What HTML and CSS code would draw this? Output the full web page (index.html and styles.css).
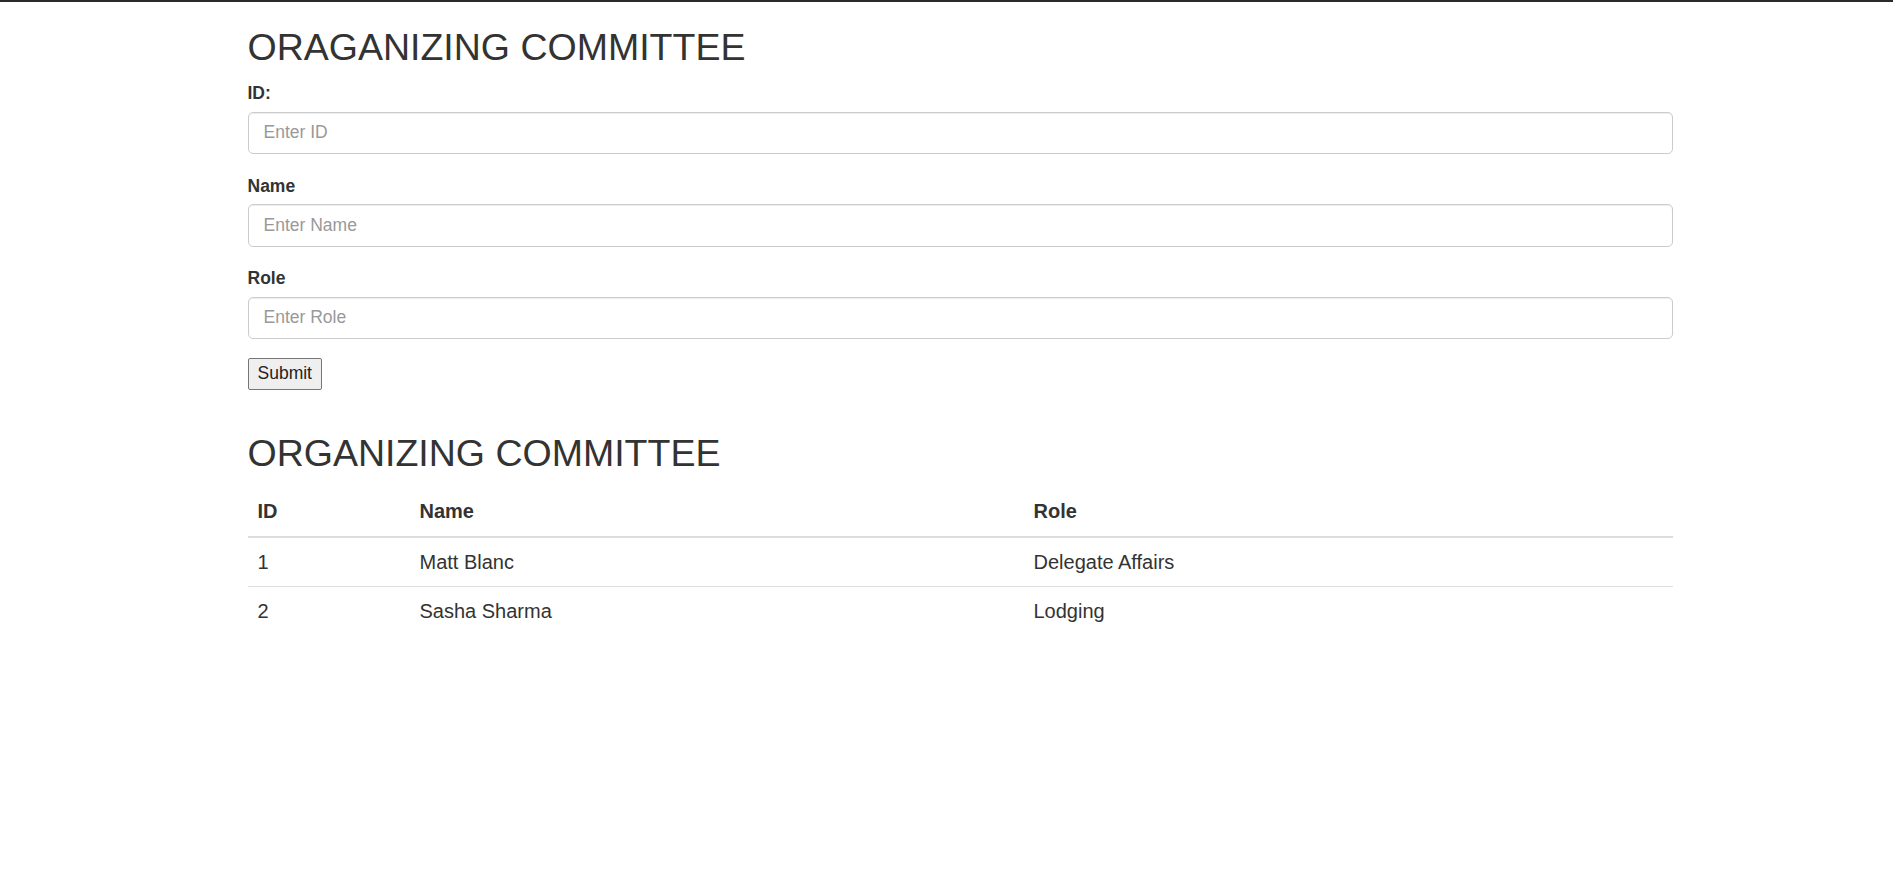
FILE: index.html
```html
<!DOCTYPE html>
<html lang="en">
<head>
<meta charset="utf-8">
<title>Organizing Committee</title>
<link rel="stylesheet" href="styles.css">
</head>
<body>
<div class="topbar"></div>
<div class="container">
  <h2 class="title">ORAGANIZING COMMITTEE</h2>
  <form class="form">
    <div class="form-group">
      <label class="label" for="id">ID:</label>
      <input class="form-control" id="id" type="text" placeholder="Enter ID">
    </div>
    <div class="form-group">
      <label class="label" for="name">Name</label>
      <input class="form-control" id="name" type="text" placeholder="Enter Name">
    </div>
    <div class="form-group">
      <label class="label" for="role">Role</label>
      <input class="form-control" id="role" type="text" placeholder="Enter Role">
    </div>
    <div class="submit-row">
      <button class="btn-submit" type="button">Submit</button>
    </div>
  </form>
  <h2 class="title">ORGANIZING COMMITTEE</h2>
  <table class="table">
    <colgroup>
      <col class="col-id">
      <col class="col-name">
      <col class="col-role">
    </colgroup>
    <thead>
      <tr><th>ID</th><th>Name</th><th>Role</th></tr>
    </thead>
    <tbody>
      <tr><td>1</td><td>Matt Blanc</td><td>Delegate Affairs</td></tr>
      <tr><td>2</td><td>Sasha Sharma</td><td>Lodging</td></tr>
    </tbody>
  </table>
</div>
</body>
</html>
```

FILE: styles.css
```css
* { box-sizing: border-box; }
html, body {
  margin: 0;
  padding: 0;
  background: #fff;
}
body {
  font-family: "Liberation Sans", Arial, Helvetica, sans-serif;
  font-size: 17.5px;
  line-height: 25px;
  color: #333;
}
.topbar {
  height: 2px;
  background: #2a2a2a;
}
.container {
  width: 1425px;
  margin-left: 247.5px;
  padding-top: 0.1px;
}
.title {
  font-size: 37.5px;
  line-height: 41.25px;
  font-weight: 400;
  margin: 24.5px 0 12.5px;
  color: #333;
}
.form { margin: 0; }
.form-group {
  margin-bottom: 18.75px;
}
.label {
  display: block;
  font-weight: 700;
  font-size: 17.5px;
  line-height: 25px;
  padding-top: 1px;
  margin-bottom: 5.25px;
}
.form-control {
  display: block;
  width: 100%;
  height: 42.5px;
  padding: 7.5px 15px;
  font-family: inherit;
  font-size: 17.5px;
  line-height: 25px;
  color: #555;
  background: #fff;
  border: 1px solid #ccc;
  border-radius: 5px;
  box-shadow: inset 0 1px 1px rgba(0,0,0,.075);
  outline: none;
}
.form-control::placeholder {
  color: #999;
}
.submit-row {
  margin: 0;
  padding-bottom: 19px;
}
.btn-submit {
  display: block;
  height: 32px;
  padding: 0 9px;
  font-family: inherit;
  font-size: 17.5px;
  line-height: 25px;
  color: #222;
  background: #efefef;
  border: 1px solid #767676;
  border-radius: 2px;
}
.table {
  width: 100%;
  border-collapse: collapse;
  border-spacing: 0;
  table-layout: fixed;
  font-size: 20px;
  line-height: 28.57px;
}
.col-id { width: 162px; }
.col-name { width: 614px; }
.table th,
.table td {
  padding: 10px;
  text-align: left;
}
.table th {
  font-weight: 700;
  vertical-align: bottom;
  border-bottom: 2px solid #ddd;
}
.table td {
  vertical-align: top;
  border-top: 1px solid #ddd;
}
```
